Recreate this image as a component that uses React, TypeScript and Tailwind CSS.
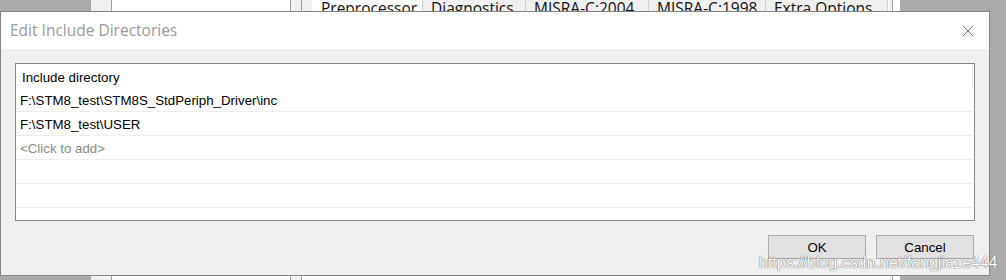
import React from "react";

const rows = [
  { text: "F:\\STM8_test\\STM8S_StdPeriph_Driver\\inc", muted: false },
  { text: "F:\\STM8_test\\USER", muted: false },
  { text: "<Click to add>", muted: true },
  { text: "", muted: false },
  { text: "", muted: false },
];

const tabs = [
  { label: "Diagnostics", w: "w-[103px]" },
  { label: "MISRA-C:2004", w: "w-[123px]" },
  { label: "MISRA-C:1998", w: "w-[117px]" },
  { label: "Extra Options", w: "w-[122px]" },
];

function Backdrop() {
  return (
    <div className="flex h-[280px] w-[1006px]">
      <div className="w-[91px] bg-[#aaaaaa]" />
      <div className="w-[21px] border-r border-[#a0a0a0] bg-[#f0f0f0]" />
      <div className="w-[179px] border-r border-[#a0a0a0] bg-white pl-[9px] pt-[9px] font-['Open_Sans',sans-serif] text-[15px] leading-none text-[#222]">
        Select Compiler
      </div>
      <div className="w-[11px] border-r border-[#a0a0a0] bg-[#f0f0f0]" />
      <div className="flex w-[587px] flex-col bg-white">
        <div className="flex h-[11px] font-['Open_Sans',sans-serif] text-[15.5px] leading-none text-[#111]">
          <div className="w-[10px] bg-[#f0f0f0]" />
          <div className="w-[111px] whitespace-nowrap border-r border-[#d0d0d0] bg-white pl-[9px] pt-[1px]">Preprocessor</div>
          {tabs.map((t) => (
            <div key={t.label} className={`${t.w} whitespace-nowrap border-r border-[#d0d0d0] bg-[#f0f0f0] pl-[8px] pt-[1px]`}>
              {t.label}
            </div>
          ))}
        </div>
        <div className="flex-1" />
      </div>
      <div className="w-[4px] border-r border-[#a0a0a0] bg-[#f0f0f0]" />
      <div className="w-[7px] bg-white" />
      <div className="flex-1 bg-[#aaaaaa]" />
    </div>
  );
}

function CloseIcon() {
  return (
    <svg width="12" height="12" viewBox="0 0 12 12" className="text-[#6f6f6f]">
      <path d="M1 1 L11 11 M11 1 L1 11" stroke="currentColor" strokeWidth="1" fill="none" />
    </svg>
  );
}

function Dialog() {
  return (
    <div className="absolute left-0 top-[11px] flex h-[265px] w-[990px] flex-col border border-[#858585] bg-[#f0f0f0]">
      <div className="flex h-[37px] items-center justify-between bg-white pl-[9px] pr-[15px]">
        <span className="font-['Open_Sans',sans-serif] text-[15.5px] text-[#9a9a9a]">Edit Include Directories</span>
        <CloseIcon />
      </div>
      <div className="flex flex-1 flex-col px-[14px] pt-[14px] font-['Liberation_Sans',Arial,sans-serif] text-[13.3px]">
        <div className="flex h-[158px] flex-col border border-[#828790] bg-white">
          <div className="flex h-[24px] items-center justify-between">
            <span className="pl-[6px] pt-[3px] text-black">Include directory</span>
            <div className="mr-px h-[24px] w-px bg-[#e5e5e5]" />
          </div>
          {rows.map((r, i) => (
            <div key={i} className="mr-[1px] flex h-[24px] items-center border-b border-[#ededed] pl-[4px] pt-[3px]">
              <span className={r.muted ? "text-[#8a8a8a]" : "text-black"}>{r.text}</span>
            </div>
          ))}
        </div>
        <div className="mt-[14px] flex justify-end gap-[10px] pr-px">
          <button className="h-[24px] w-[98px] border border-[#adadad] bg-[#e1e1e1] pt-[1px] text-black">OK</button>
          <button className="h-[24px] w-[98px] border border-[#adadad] bg-[#e1e1e1] pt-[1px] text-black">Cancel</button>
        </div>
      </div>
    </div>
  );
}

export default function App() {
  return (
    <div className="relative h-[280px] w-[1006px] overflow-hidden bg-[#aaaaaa]">
      <Backdrop />
      <Dialog />
      <div className="absolute left-[759px] top-[251px] font-['Liberation_Sans',Arial,sans-serif] text-[16px] text-white [text-shadow:0_0_1px_#555,0_0_1px_#777]">
        https://blog.csdn.net/fangjiaze444
      </div>
    </div>
  );
}
